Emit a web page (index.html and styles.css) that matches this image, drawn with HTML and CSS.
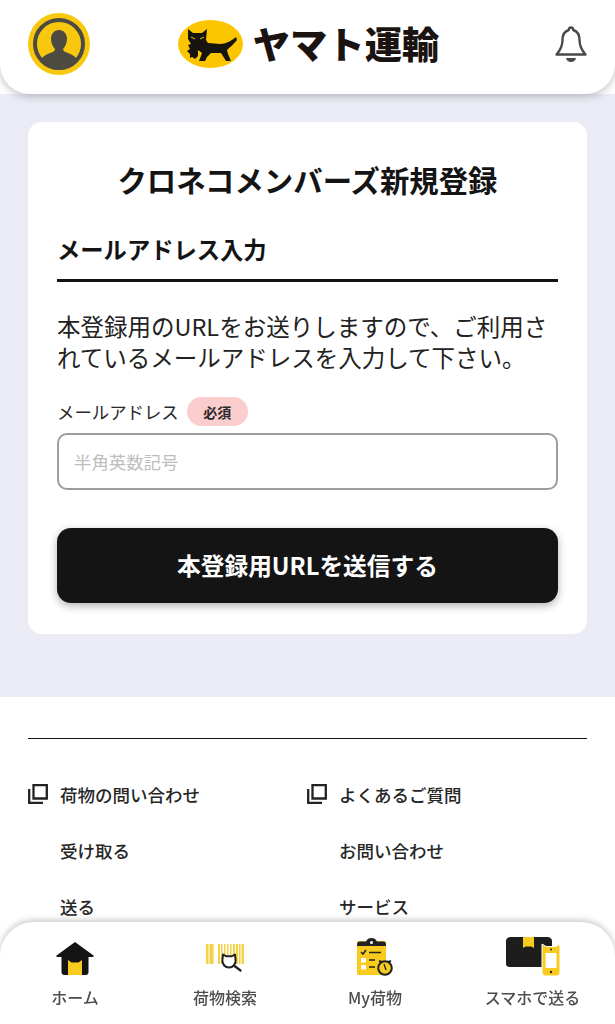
FILE: index.html
```html
<!DOCTYPE html>
<html lang="ja">
  <head>
    <meta charset="UTF-8" />
    <title>クロネコメンバーズ新規登録</title>
    <link rel="stylesheet" href="styles.css">
  </head>
  <body>
    <!-- Top bar -->
    <header class="top-bar">
      <svg class="avatar" viewBox="0 0 62 62">
        <circle cx="31" cy="31" r="31" fill="#f8c80e" />
        <circle cx="31" cy="31" r="24" fill="none" stroke="#4d4a42" stroke-width="4" />
        <path d="M31 17c5 0 8 4 8 9 0 4-2 8-4 10 0 2 2 3 5 4 5 2 8 4 10 8-4 4-11 7-19 7s-15-3-19-7c2-4 5-6 10-8 3-1 5-2 5-4-2-2-4-6-4-10 0-5 3-9 8-9z" fill="#4d4a42" />
      </svg>
      <div class="logo">
        <svg class="logo-mark" viewBox="0 0 65 48">
          <ellipse cx="32.500" cy="24" rx="32.500" ry="24" fill="#fbc600" />
          <path d="M10 9l5 4h9l5-4-1 11 2 3 12 1c6 0 11-3 16-7l1 3c-3 4-7 7-10 10l1 4 3 7h-5l-5-8H33l-4 4-2 4h-6l3-8-4-3v6l-3 3-3-2-2 1v-4l-3-3 3-2-2-4 3-1-3-5z" fill="#17130f" />
          <path d="M13 17l4 2M26 17l-4 2" stroke="#fbc600" stroke-width="1" />
        </svg>
        <span class="logo-text">ヤマト運輸</span>
      </div>
      <svg class="bell" viewBox="0 0 32 38">
        <path d="M16 2.500c1.300 0 2.200 1 2.200 2.500 5 1.500 6.300 5.500 6.300 10 0 6 2 10 6 14.500H1.500c4-4.500 6-8.500 6-14.500 0-4.500 1.300-8.500 6.300-10 0-1.500.9-2.500 2.200-2.500z" fill="none" stroke="#4a4a4a" stroke-width="2.400" stroke-linejoin="round" />
        <path d="M11 33h10c-.5 2.500-2.500 4-5 4s-4.500-1.500-5-4z" fill="#4a4a4a" />
      </svg>
    </header>

    <!-- Main form -->
    <main class="main-area">
      <section class="card">
        <h1 class="card-title">クロネコメンバーズ新規登録</h1>
        <h2 class="section-title">メールアドレス入力</h2>
        <p class="lead">本登録用のURLをお送りしますので、ご利用されているメールアドレスを入力して下さい。</p>
        <div class="field-label">
          <label for="email">メールアドレス</label>
          <span class="badge">必須</span>
        </div>
        <input id="email" class="text-input" type="text" placeholder="半角英数記号" />
        <button class="submit-button" type="button">本登録用URLを送信する</button>
      </section>
    </main>

    <!-- Footer links -->
    <footer class="site-footer">
      <div class="footer-rule"></div>
      <div class="link-grid">
        <a class="link-head">
          <svg class="copy-icon" viewBox="0 0 20 20"><path d="M5.500 1.200h13.300V14.500H5.500z M1.200 5V18.800H15" fill="none" stroke="#222" stroke-width="2.300" /></svg>
          荷物の問い合わせ
        </a>
        <a class="link-head">
          <svg class="copy-icon" viewBox="0 0 20 20"><path d="M5.500 1.200h13.300V14.500H5.500z M1.200 5V18.800H15" fill="none" stroke="#222" stroke-width="2.300" /></svg>
          よくあるご質問
        </a>
        <a class="link-item">受け取る</a>
        <a class="link-item">お問い合わせ</a>
        <a class="link-item">送る</a>
        <a class="link-item">サービス</a>
      </div>
    </footer>

    <!-- Bottom navigation, stays over the page -->
    <nav class="bottom-nav">
      <a class="nav-item">
        <svg class="nav-icon icon-home" viewBox="0 0 38 33">
          <path d="M19 0l18.500 13.500c.5.800 0 1.500-1 1.500H32.500V30c0 2-1 3-3 3H8.500c-2 0-3-1-3-3V15H1.500c-1 0-1.500-.7-1-1.500z" fill="#141414" />
          <path d="M12 18l3.500 2.500h7L26 18v15H12z" fill="#f8cb1e" />
        </svg>
        <span>ホーム</span>
      </a>
      <a class="nav-item">
        <svg class="nav-icon icon-search" viewBox="0 0 38 28">
          <g fill="#f4d243">
            <rect x="0" y="0" width="2.500" height="20" />
            <rect x="3.500" y="0" width="4" height="20" />
            <rect x="12" y="0" width="2" height="20" />
            <rect x="15" y="0" width="1.500" height="20" />
            <rect x="18" y="0" width="1.500" height="20" />
            <rect x="21" y="0" width="1.500" height="20" />
            <rect x="24" y="0" width="1.500" height="20" />
            <rect x="27" y="0" width="2" height="20" />
            <rect x="30" y="0" width="2" height="20" />
            <rect x="33" y="0" width="1.500" height="20" />
            <rect x="35.500" y="0" width="2.500" height="20" />
          </g>
          <path d="M17 10.500l3 1.700h6l3-1.700.6 5.500c.4 4-2.600 7.500-6.600 7.500s-7-3.500-6.600-7.500z" fill="#fff" stroke="#222" stroke-width="2" stroke-linejoin="round" />
          <path d="M28.500 22l6 4.500" stroke="#222" stroke-width="2.200" stroke-linecap="round" />
        </svg>
        <span>荷物検索</span>
      </a>
      <a class="nav-item">
        <svg class="nav-icon icon-clip" viewBox="0 0 36 38">
          <rect x="0" y="3" width="29" height="34" rx="1.500" fill="#f8cb1e" />
          <path d="M0 7c0-2.500 1-3.500 3-3.500h6C10 1 12 0 14.500 0S19 1 20 3.500h6c2 0 3 1 3 3.500v1H0z" fill="#222" />
          <circle cx="14.500" cy="4.500" r="1.500" fill="#fff" />
          <path d="M4 14l2 2 3-4" fill="none" stroke="#222" stroke-width="1.500" />
          <rect x="4" y="20" width="5" height="4.500" fill="#fff" />
          <rect x="4" y="27" width="5" height="4.500" fill="#fff" />
          <path d="M12 14.500h12M12 22h6M12 29h6" stroke="#222" stroke-width="1.500" />
          <circle cx="28" cy="30" r="6.800" fill="#f8cb1e" stroke="#222" stroke-width="2" />
          <path d="M22 23l3 1M34 23l-3 1" stroke="#222" stroke-width="2" />
          <path d="M27 26l2 6" stroke="#222" stroke-width="1.300" />
        </svg>
        <span>My荷物</span>
      </a>
      <a class="nav-item">
        <svg class="nav-icon icon-send" viewBox="0 0 54 39">
          <path d="M5 0h36c2.500 0 5 1.500 5 4v23c0 2.500-1.500 3-4 3H5c-2.500 0-5-.5-5-3V4C0 1.500 2.500 0 5 0z" fill="#1d1d1d" />
          <path d="M17 0h11v11l-2.500-1.500h-6L17 11z" fill="#f8cb1e" />
          <path d="M36 7l4 2.500h10L53 7c1 1 1 3 1 5v23c0 2.500-1.500 4-4 4H40c-2.500 0-4-1.500-4-4z" fill="#f8cb1e" stroke="#fff" stroke-width="1" />
          <rect x="39.500" y="16" width="11" height="15" rx="1" fill="#fff" />
          <circle cx="45" cy="35" r="1.200" fill="#222" />
          <circle cx="45" cy="12.500" r="1" fill="#222" />
        </svg>
        <span>スマホで送る</span>
      </a>
    </nav>
  </body>
</html>
```

FILE: styles.css
```css
* {
  box-sizing: border-box;
}

body {
  margin: 0;
  height: 1024px;
  overflow: hidden;
  background-color: #fff;
  color: #141414;
  font-family: "Noto Sans CJK JP", "Noto Sans", sans-serif;
}

/* Top bar */
.top-bar {
  height: 94px;
  padding: 0 28px;
  display: flex;
  align-items: flex-start;
  justify-content: space-between;
  background-color: #fff;
  border-radius: 0 0 30px 30px;
  box-shadow: 0 2px 8px rgba(0, 0, 0, 0.25);
  position: relative;
}

.avatar {
  width: 62px;
  height: 62px;
  margin-top: 13px;
}

.logo {
  display: flex;
  align-items: center;
  gap: 10px;
  margin-top: 20px;
  margin-right: 28px;
  height: 48px;
}

.logo-mark {
  width: 65px;
  height: 48px;
}

.logo-text {
  font-size: 37.300px;
  font-weight: 900;
  line-height: 1;
  color: #1a1311;
}

.bell {
  width: 32px;
  height: 38px;
  margin-top: 25px;
}

/* Main form */
.main-area {
  height: 603px;
  padding: 28px 28px 0;
  background-color: #ebebf5;
}

.card {
  height: 512px;
  padding: 0 29px;
  display: flex;
  flex-direction: column;
  background-color: #fff;
  border-radius: 14px;
}

.card-title {
  margin: 37px 0 0;
  font-size: 29.400px;
  font-weight: 700;
  line-height: 40px;
  text-align: center;
}

.section-title {
  margin: 33px 0 0;
  padding-bottom: 13px;
  font-size: 23.300px;
  font-weight: 700;
  line-height: 34px;
  border-bottom: 3px solid #141414;
}

.lead {
  margin: 29px 0 0;
  font-size: 23.500px;
  line-height: 31px;
  color: #222;
}

.field-label {
  margin-top: 24px;
  height: 29px;
  display: flex;
  align-items: center;
  gap: 8px;
  font-size: 17.400px;
  color: #2a2a2a;
}

.badge {
  width: 61px;
  height: 29px;
  display: flex;
  align-items: center;
  justify-content: center;
  background-color: #fbcdcd;
  border-radius: 15px;
  font-size: 14px;
  font-weight: 700;
}

.text-input {
  margin-top: 7px;
  height: 57px;
  padding: 0 15px;
  border: 2px solid #9c9c9c;
  border-radius: 10px;
  background-color: #fff;
  font-family: inherit;
  font-size: 17.400px;
  outline: none;
}

.text-input::placeholder {
  color: #bdbdbd;
}

.submit-button {
  margin-top: 38px;
  height: 75px;
  padding: 0 0 2px;
  border: 0;
  border-radius: 14px;
  background-color: #141414;
  color: #fff;
  font-family: inherit;
  font-size: 23.700px;
  font-weight: 700;
  box-shadow: 0 3px 8px rgba(0, 0, 0, 0.3);
}

/* Footer links */
.site-footer {
  padding: 41px 28px 0;
}

.footer-rule {
  height: 1px;
  background-color: #141414;
}

.link-grid {
  margin-top: 27px;
  display: grid;
  grid-template-columns: 279px 1fr;
  grid-auto-rows: 56px;
}

.link-head,
.link-item {
  display: flex;
  align-items: center;
  height: 56px;
  font-size: 17.500px;
  font-weight: 500;
  color: #262626;
}

.link-head {
  gap: 12px;
}

.link-item {
  padding-left: 32px;
}

.copy-icon {
  width: 20px;
  height: 20px;
}

/* Bottom navigation */
.bottom-nav {
  position: fixed;
  left: 0;
  right: 0;
  bottom: 0;
  height: 102px;
  display: flex;
  background-color: #fff;
  border-radius: 34px 34px 0 0;
  box-shadow: 0 -2px 6px rgba(0, 0, 0, 0.22);
}

.nav-item {
  width: 150px;
  height: 102px;
  display: flex;
  flex-direction: column;
  align-items: center;
  font-size: 16px;
  font-weight: 500;
  line-height: 24px;
  color: #4d4d4d;
}

.nav-item:last-child {
  width: 165px;
}

.nav-item span {
  margin-top: auto;
  margin-bottom: 15px;
}

.nav-icon {
  display: block;
}

.icon-home {
  width: 38px;
  height: 33px;
  margin-top: 20px;
}

.icon-search {
  width: 38px;
  height: 28px;
  margin-top: 22px;
}

.icon-clip {
  width: 36px;
  height: 38px;
  margin-top: 16px;
}

.icon-send {
  width: 54px;
  height: 39px;
  margin-top: 15px;
}
```
